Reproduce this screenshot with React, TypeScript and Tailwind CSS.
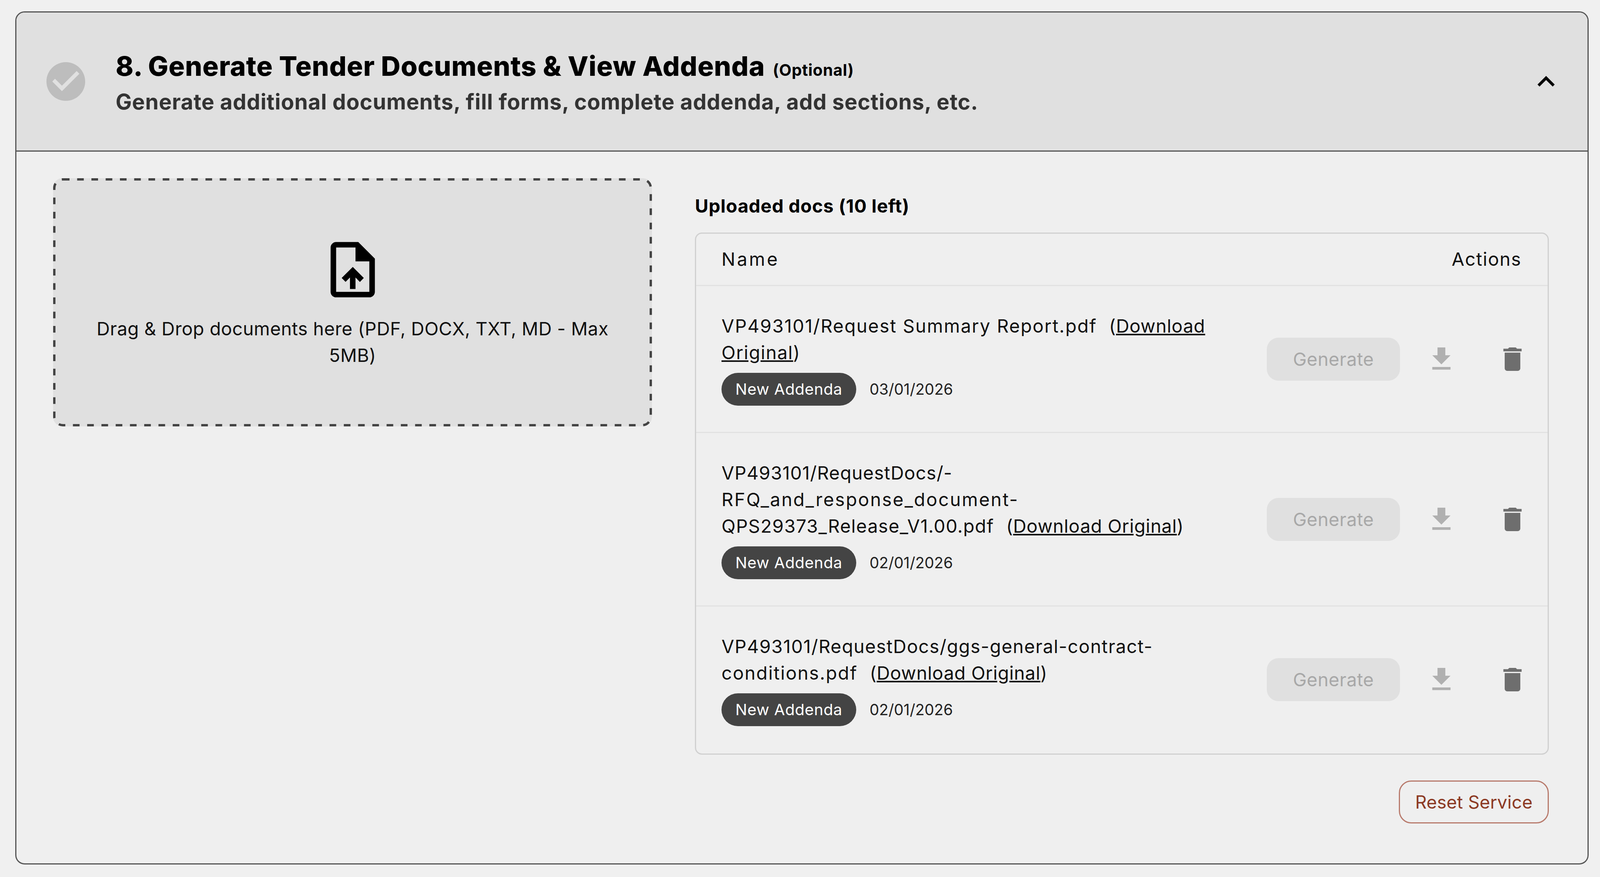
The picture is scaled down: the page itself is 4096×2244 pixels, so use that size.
import React from 'react';
import { MdCheckCircle, MdDelete, MdFileDownload, MdKeyboardArrowUp, MdOutlineUploadFile } from 'react-icons/md';

interface DocLine {
  text: string;
  spacing: string;
}

interface Doc {
  lines: DocLine[];
  linkFirst: string;
  linkSecond?: string;
  date: string;
}

// spacing is per line because Inter stands in for the wider face in the picture
const docs: Doc[] = [
  {
    lines: [{ text: 'VP493101/Request Summary Report.pdf', spacing: 'tracking-[2px]' }],
    linkFirst: 'Download',
    linkSecond: 'Original',
    date: '03/01/2026',
  },
  {
    lines: [
      { text: 'VP493101/RequestDocs/-', spacing: 'tracking-[1px]' },
      { text: 'RFQ_and_response_document-', spacing: 'tracking-[2.7px]' },
      { text: 'QPS29373_Release_V1.00.pdf', spacing: 'tracking-[1.3px]' },
    ],
    linkFirst: 'Download Original',
    date: '02/01/2026',
  },
  {
    lines: [
      { text: 'VP493101/RequestDocs/ggs-general-contract-', spacing: 'tracking-[1.4px]' },
      { text: 'conditions.pdf', spacing: 'tracking-[2.1px]' },
    ],
    linkFirst: 'Download Original',
    date: '02/01/2026',
  },
];

function DocRow({ doc, last }: { doc: Doc; last: boolean }) {
  return (
    <div className={`flex items-center justify-between pl-[65px] pr-[50px] pt-[68px] ${last ? 'pb-[70px]' : 'pb-[67px] border-b-[3px] border-[#e2e2e2]'}`}>
      <div className="flex flex-col gap-[18px]">
        <div className="text-[47px] leading-[68px] text-[#111] whitespace-nowrap">
          {doc.lines.map((line, i) => (
            <React.Fragment key={line.text}>
              {i > 0 && <br />}
              <span className={line.spacing}>{line.text}</span>
            </React.Fragment>
          ))}
          <span className="ml-[31px] tracking-[0.7px]">
            (<span className="underline">{doc.linkFirst}</span>
            {doc.linkSecond ? null : ')'}
          </span>
          {doc.linkSecond && (
            <>
              <br />
              <span className="tracking-[1.5px]">
                <span className="underline">{doc.linkSecond}</span>)
              </span>
            </>
          )}
        </div>
        <div className="flex items-center gap-[34px]">
          <span className="h-[84px] w-[345px] flex items-center justify-center rounded-full bg-[#444444] text-[40px] tracking-[0.6px] text-white">
            New Addenda
          </span>
          <span className="text-[39px] text-[#222]">{doc.date}</span>
        </div>
      </div>
      <div className="flex items-center">
        <button className="w-[341px] h-[110px] rounded-[30px] bg-[#e0e0e0] text-[47px] tracking-[0.4px] text-[#a8a8a8]">Generate</button>
        <MdFileDownload className="ml-[66px] w-[80px] h-[80px] text-[#b0b0b0]" />
        <MdDelete className="ml-[102px] w-[80px] h-[80px] text-[#6e6e6e]" />
      </div>
    </div>
  );
}

export default function App() {
  return (
    <div className="min-h-screen bg-[#f0f0f0] pl-[39px] pr-[29px] pt-[29px] font-['Inter','Liberation_Sans',sans-serif]">
      <div className="h-[2183px] rounded-[24px] border-[3px] border-[#555555] bg-[#efefef] overflow-hidden">
        <div className="h-[356px] flex items-center justify-between bg-[#e0e0e0] border-b-[3px] border-[#555555] pl-[67px] pr-[62px]">
          <div className="flex items-center">
            <MdCheckCircle className="w-[119px] h-[119px] text-[#bdbdbd]" />
            <div className="ml-[68px] pt-[5px]">
              <div className="flex items-baseline text-black font-bold whitespace-nowrap">
                <span className="text-[69px] leading-[92px] font-extrabold tracking-[0.7px]">8. Generate Tender Documents &amp; View Addenda</span>
                <span className="ml-[20px] text-[41px] tracking-[0.7px]">(Optional)</span>
              </div>
              <div className="mt-[5px] text-[55px] leading-[80px] font-bold tracking-[0.8px] text-[#333] whitespace-nowrap">
                Generate additional documents, fill forms, complete addenda, add sections, etc.
              </div>
            </div>
          </div>
          <MdKeyboardArrowUp className="w-[88px] h-[88px] text-black" />
        </div>

        <div className="flex pl-[94px] pr-[99px] pt-[68px]">
          <div className="relative w-[1533px] h-[635px] shrink-0 flex flex-col items-center justify-center rounded-[24px] bg-[#e0e0e0]">
            <svg className="absolute inset-0" width="1533" height="635" fill="none">
              <rect x="3" y="3" width="1527" height="629" rx="22" stroke="#444444" strokeWidth="6" strokeDasharray="17 19.5" />
            </svg>
            <MdOutlineUploadFile className="w-[170px] h-[170px] text-black" />
            <div className="mt-[32px] text-[47px] leading-[68px] tracking-[0.4px] text-[#111] text-center">
              Drag &amp; Drop documents here (PDF, DOCX, TXT, MD - Max
              <br />
              5MB)
            </div>
          </div>

          <div className="ml-[110px] flex-1">
            <div className="mt-[37px] mb-[34px] text-[47px] leading-[68px] font-bold tracking-[0.9px] text-black">Uploaded docs (10 left)</div>
            <div className="rounded-[18px] border-[3px] border-[#d0d0d0]">
              <div className="h-[134px] flex items-center justify-between pl-[65px] pr-[67px] border-b-[3px] border-[#e2e2e2] text-[47px] text-[#111]">
                <span className="tracking-[4.4px]">Name</span>
                <span className="tracking-[1.7px]">Actions</span>
              </div>
              {docs.map((doc, i) => (
                <DocRow key={doc.date + i} doc={doc} last={i === docs.length - 1} />
              ))}
            </div>
            <div className="flex justify-end mt-[66px]">
              <button className="w-[384px] h-[110px] rounded-[32px] border-[3px] border-[#b87a6c] text-[46px] tracking-[0.1px] text-[#8c3a24]">
                Reset Service
              </button>
            </div>
          </div>
        </div>
      </div>
    </div>
  );
}
